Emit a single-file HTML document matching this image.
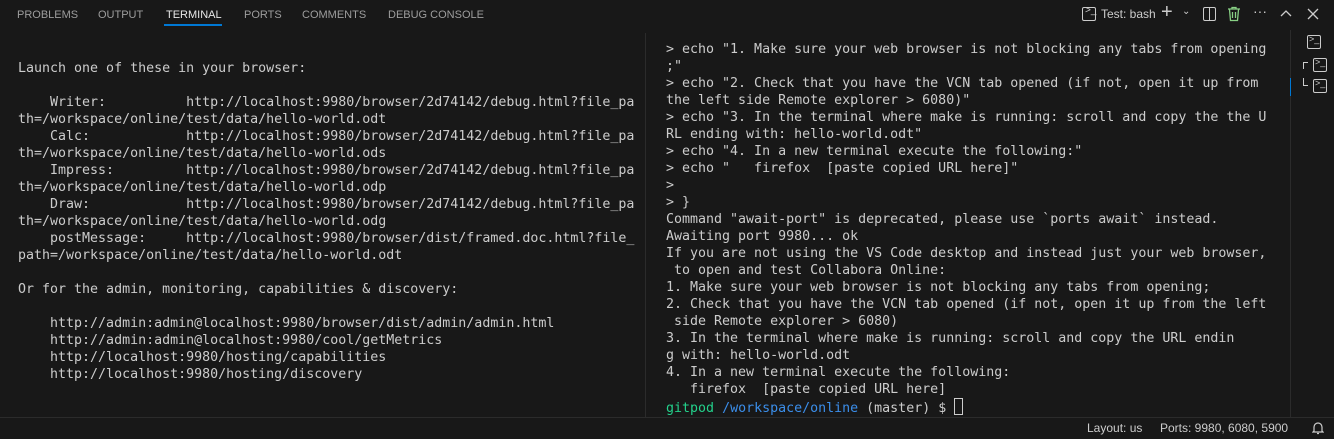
<!DOCTYPE html>
<html><head><style>
body{margin:0;width:1334px;height:438px;background:#181818;overflow:hidden;position:relative;font-family:"Liberation Sans",sans-serif;color:#ccc}
.tabs{position:absolute;top:0;left:0;height:33px;width:1334px}
.tab{position:absolute;top:8px;font-size:11px;color:#9d9d9d;letter-spacing:0}
.tab.act{color:#e7e7e7}
.ul{position:absolute;left:164px;top:24px;width:58px;height:2px;background:#0078d4}
.term{position:absolute;font-family:"DejaVu Sans Mono","Liberation Mono",monospace;font-size:13.3px;line-height:17px;white-space:pre;color:#cccccc}
.div{position:absolute;left:645px;top:33px;width:1px;height:384px;background:#2b2b2b}
.div2{position:absolute;left:1290px;top:30px;width:1px;height:387px;background:#2b2b2b}
.status{position:absolute;left:0;top:417px;width:1334px;height:21px;background:#181818;border-top:1px solid #2b2b2b;font-size:12px;color:#ccc}
.g{color:#23d18b}.b{color:#3b8eea}
.ico{position:absolute;border:1.3px solid #ccc;border-radius:2px;box-sizing:border-box}
</style></head><body>
<div class="tabs">
<span class="tab" style="left:17px;top:9px">PROBLEMS</span>
<span class="tab" style="left:98px;top:9px">OUTPUT</span>
<span class="tab act" style="left:166px;top:9px">TERMINAL</span>
<span class="tab" style="left:244px;top:9px">PORTS</span>
<span class="tab" style="left:302px;top:9px">COMMENTS</span>
<span class="tab" style="left:388px;top:9px">DEBUG CONSOLE</span>
<div class="ul"></div>
<div class="ico" style="left:1082px;top:7px;width:14px;height:14px"></div>
<span style="position:absolute;left:1085px;top:5px;font-size:10px">&gt;_</span>
<span style="position:absolute;left:1101px;top:7px;font-size:12px;color:#ccc">Test: bash</span>
<span style="position:absolute;left:1161px;top:1px;font-size:20px;font-weight:300">+</span>
<span style="position:absolute;left:1182px;top:6px;font-size:10px">⌄</span>
<div class="ico" style="left:1203px;top:7px;width:13px;height:14px;border-width:1.3px"></div>
<div style="position:absolute;left:1209px;top:7px;width:1.3px;height:14px;background:#ccc"></div>
<svg style="position:absolute;left:1227px;top:6px" width="14" height="16" viewBox="0 0 14 16"><path d="M1 3h12M5 3V1.5h4V3M2.5 3.5l1 11h7l1-11M5.5 6v6M8.5 6v6" stroke="#89d185" fill="none" stroke-width="1.3"/></svg>
<span style="position:absolute;left:1253px;top:3px;font-size:14px">···</span>
<svg style="position:absolute;left:1280px;top:9px" width="12" height="8"><path d="M1 7l5-5 5 5" stroke="#ccc" fill="none" stroke-width="1.3"/></svg>
<svg style="position:absolute;left:1307px;top:8px" width="12" height="12"><path d="M1 1l10 10M11 1L1 11" stroke="#ccc" stroke-width="1.3"/></svg>
</div>
<div class="div"></div><div class="div2"></div>
<div class="ico" style="left:1307px;top:35px;width:14px;height:14px"></div><span style="position:absolute;left:1309px;top:34px;font-size:9px">&gt;_</span>
<div class="ico" style="left:1313px;top:58px;width:14px;height:14px"></div><span style="position:absolute;left:1315px;top:57px;font-size:9px">&gt;_</span>
<div class="ico" style="left:1313px;top:79px;width:14px;height:14px"></div><span style="position:absolute;left:1315px;top:78px;font-size:9px">&gt;_</span>
<div style="position:absolute;left:1303px;top:62px;width:4px;height:6px;border-left:1.3px solid #ccc;border-top:1.3px solid #ccc"></div>
<div style="position:absolute;left:1303px;top:78px;width:4px;height:7px;border-left:1.3px solid #ccc;border-bottom:1.3px solid #ccc"></div>
<div style="position:absolute;left:1290px;top:78px;width:1px;height:18px;background:#0078d4"></div>
<div class="term" style="left:18px;top:43px">
Launch one of these in your browser:

    Writer:          http://localhost:9980/browser/2d74142/debug.html?file_pa
th=/workspace/online/test/data/hello-world.odt
    Calc:            http://localhost:9980/browser/2d74142/debug.html?file_pa
th=/workspace/online/test/data/hello-world.ods
    Impress:         http://localhost:9980/browser/2d74142/debug.html?file_pa
th=/workspace/online/test/data/hello-world.odp
    Draw:            http://localhost:9980/browser/2d74142/debug.html?file_pa
th=/workspace/online/test/data/hello-world.odg
    postMessage:     http://localhost:9980/browser/dist/framed.doc.html?file_
path=/workspace/online/test/data/hello-world.odt

Or for the admin, monitoring, capabilities &amp; discovery:

    http://admin:admin@localhost:9980/browser/dist/admin/admin.html
    http://admin:admin@localhost:9980/cool/getMetrics
    http://localhost:9980/hosting/capabilities
    http://localhost:9980/hosting/discovery</div>
<div class="term" style="left:666px;top:41px">&gt; echo "1. Make sure your web browser is not blocking any tabs from opening
;"
&gt; echo "2. Check that you have the VCN tab opened (if not, open it up from
the left side Remote explorer &gt; 6080)"
&gt; echo "3. In the terminal where make is running: scroll and copy the the U
RL ending with: hello-world.odt"
&gt; echo "4. In a new terminal execute the following:"
&gt; echo "   firefox  [paste copied URL here]"
&gt;
&gt; }
Command "await-port" is deprecated, please use `ports await` instead.
Awaiting port 9980... ok
If you are not using the VS Code desktop and instead just your web browser,
 to open and test Collabora Online:
1. Make sure your web browser is not blocking any tabs from opening;
2. Check that you have the VCN tab opened (if not, open it up from the left
 side Remote explorer &gt; 6080)
3. In the terminal where make is running: scroll and copy the URL endin
g with: hello-world.odt
4. In a new terminal execute the following:
   firefox  [paste copied URL here]
<span class="g">gitpod</span> <span class="b">/workspace/online</span> (master) $ <span style="display:inline-block;width:7px;height:15px;border:1px solid #ccc;vertical-align:-3px"></span></div>
<div class="status">
<span style="position:absolute;left:1087px;top:3px">Layout: us</span>
<span style="position:absolute;left:1160px;top:3px">Ports: 9980, 6080, 5900</span>
<svg style="position:absolute;left:1312px;top:3px" width="12" height="14"><path d="M2 10V6a4 4 0 018 0v4l1 1H1zM5 12.5h2" stroke="#ccc" fill="none" stroke-width="1.2"/></svg>
</div>
</body></html>
